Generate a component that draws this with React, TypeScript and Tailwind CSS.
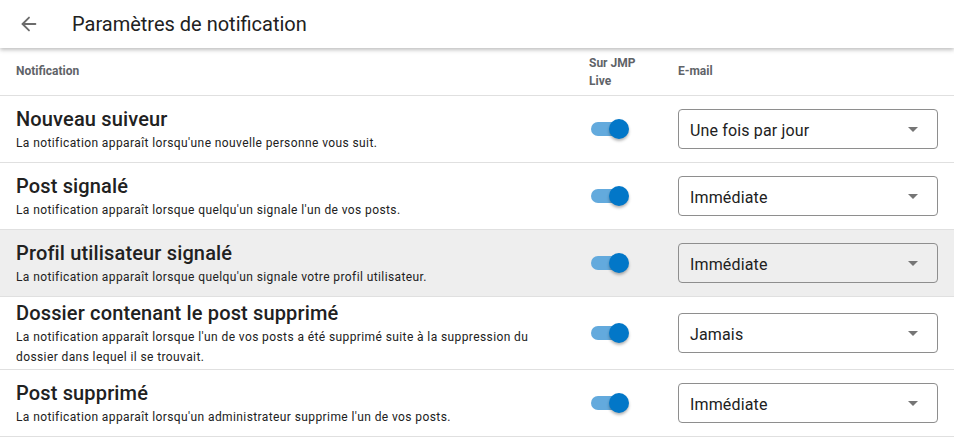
import { ArrowLeft } from 'lucide-react';

type Row = {
  title: string;
  desc: string;
  email: string;
  highlight?: boolean;
};

const rows: Row[] = [
  {
    title: 'Nouveau suiveur',
    desc: "La notification apparaît lorsqu'une nouvelle personne vous suit.",
    email: 'Une fois par jour',
  },
  {
    title: 'Post signalé',
    desc: "La notification apparaît lorsque quelqu'un signale l'un de vos posts.",
    email: 'Immédiate',
  },
  {
    title: 'Profil utilisateur signalé',
    desc: "La notification apparaît lorsque quelqu'un signale votre profil utilisateur.",
    email: 'Immédiate',
    highlight: true,
  },
  {
    title: 'Dossier contenant le post supprimé',
    desc: "La notification apparaît lorsque l'un de vos posts a été supprimé suite à la suppression du dossier dans lequel il se trouvait.",
    email: 'Jamais',
  },
  {
    title: 'Post supprimé',
    desc: "La notification apparaît lorsqu'un administrateur supprime l'un de vos posts.",
    email: 'Immédiate',
  },
];

function Toggle() {
  return (
    <div className="relative ml-[2px] h-[14px] w-[34px] rounded-full bg-[#63aadd]">
      <span className="absolute left-[18px] top-[-3px] h-[20px] w-[20px] rounded-full bg-[#0277c8] shadow-[0_2px_3px_rgba(0,0,0,0.3)]" />
    </div>
  );
}

function Select({ value }: { value: string }) {
  return (
    <div className="flex h-[40px] w-full items-center justify-between rounded-[4px] border border-[#8e8e8e] pl-[11px] pr-[19px]">
      <span className="mt-[3px] text-[16px] tracking-[0.15px] text-[#212121]">{value}</span>
      <span className="h-0 w-0 border-x-[5px] border-t-[5px] border-x-transparent border-t-[#757575]" />
    </div>
  );
}

export default function App() {
  return (
    <div className="min-h-screen bg-white" style={{ fontFamily: 'Roboto, "Liberation Sans", sans-serif' }}>
      {/* Header */}
      <header className="relative z-10 flex h-[48px] items-center bg-white shadow-[0_2px_4px_rgba(0,0,0,0.25)]">
        <ArrowLeft className="ml-[18px] h-[22px] w-[22px] text-[#6b6b6b]" strokeWidth={2} />
        <h1 className="ml-[32px] text-[20px] text-[#212121]">Paramètres de notification</h1>
      </header>

      {/* Column headers */}
      <div className="grid h-[48px] grid-cols-[573px_89px_260px] items-center border-b border-[#e0e0e0] px-4 text-[12px] font-bold text-[#5f6368]">
        <div className="mt-[-2px]">Notification</div>
        <div className="leading-[18px]">
          Sur JMP
          <br />
          Live
        </div>
        <div className="mt-[-2px]">E-mail</div>
      </div>

      {/* Rows */}
      {rows.map((r) => (
        <div
          key={r.title}
          className={`grid min-h-[67px] grid-cols-[573px_89px_260px] items-center border-b border-[#e0e0e0] px-4 py-[2px] ${
            r.highlight ? 'bg-[#eeeeee]' : 'bg-white'
          }`}
        >
          <div className="pr-[50px]">
            <div className="text-[20px] font-medium leading-[28px] tracking-[0.15px] text-[#212121]">{r.title}</div>
            <div className="text-[12px] leading-[20px] tracking-[0.4px] text-[#212121]">{r.desc}</div>
          </div>
          <div>
            <Toggle />
          </div>
          <div>
            <Select value={r.email} />
          </div>
        </div>
      ))}
    </div>
  );
}
